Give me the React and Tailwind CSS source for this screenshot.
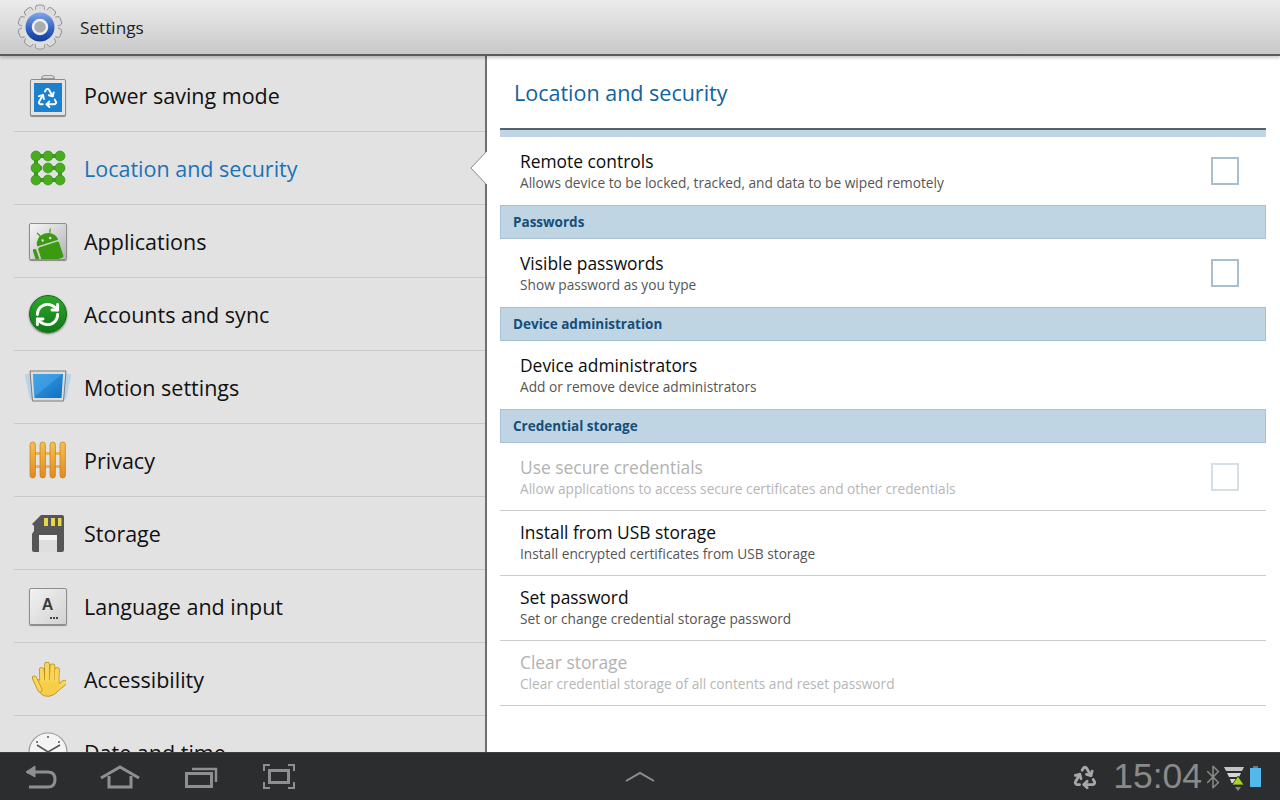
import React from 'react';
import { Recycle, RefreshCw, Bluetooth } from 'lucide-react';

const FONT = { fontFamily: '"Open Sans", "Noto Sans", sans-serif' };

function GearIcon() {
  const teeth = [0, 36, 72, 108, 144, 180, 216, 252, 288, 324];
  return (
    <svg width="46" height="46" viewBox="0 0 46 46">
      <defs>
        <linearGradient id="gearBlue" x1="0" y1="0" x2="0" y2="1">
          <stop offset="0" stopColor="#7fa6ea" />
          <stop offset="0.55" stopColor="#3464c4" />
          <stop offset="1" stopColor="#123c98" />
        </linearGradient>
      </defs>
      {teeth.map(a => (
        <rect key={a} x="18.5" y="1" width="9" height="9" rx="2.5" fill="#dcdcdc" stroke="#8e8e8e" strokeWidth="0.9" transform={`rotate(${a} 23 23)`} />
      ))}
      <circle cx="23" cy="23" r="18" fill="#dedede" />
      <circle cx="23" cy="23" r="14.5" fill="url(#gearBlue)" />
      <circle cx="23" cy="23" r="7" fill="#a9adb2" stroke="#efefef" strokeWidth="2.5" />
    </svg>
  );
}

function BatteryIcon() {
  return (
    <div className="relative w-[38px] h-[41px] flex flex-col items-center">
      <div className="w-[14px] h-[4px] bg-[#dcdcdc] border border-[#9a9a9a] rounded-t-sm" />
      <div className="w-[36px] h-[37px] bg-[#e4e4e4] border border-[#8c8c8c] rounded-[2px] p-[3px] shadow-[0_1px_1px_rgba(0,0,0,0.4)]">
        <div className="w-full h-full bg-[#1d80cc] flex items-center justify-center">
          <Recycle size={23} color="#ffffff" strokeWidth={2} />
        </div>
      </div>
    </div>
  );
}

function GridIcon() {
  const dots = [[6, 6], [18, 6], [30, 6], [6, 18], [18, 18], [30, 18], [6, 30], [18, 30], [30, 30]];
  return (
    <svg width="36" height="36" viewBox="0 0 36 36">
      <path d="M6 6H30M6 6V30H30V18H18" fill="none" stroke="#3f9e1e" strokeWidth="4" />
      <path d="M6 18H12" fill="none" stroke="#3f9e1e" strokeWidth="4" />
      {dots.map(([x, y]) => (
        <circle key={`${x}-${y}`} cx={x} cy={y} r="5" fill="#47ac1e" stroke="#2f8a15" strokeWidth="0.6" />
      ))}
    </svg>
  );
}

function AndroidIcon() {
  return (
    <div className="w-[38px] h-[37px] border border-[#8e8e8e] rounded-[2px] bg-gradient-to-br from-[#f6f6f6] to-[#b4b4b4] shadow-[0_1px_1px_rgba(0,0,0,0.4)] overflow-hidden">
      <svg width="36" height="35" viewBox="0 0 36 35">
        <g transform="rotate(-18 18 20)" fill="#3c9a12">
          <path d="M7 19a11 10 0 0 1 22 0z" />
          <rect x="7" y="20.5" width="22" height="17" rx="2" />
          <rect x="1.5" y="20.5" width="3.6" height="12" rx="1.8" />
          <path d="M13 10L11 6M23 10L25 6" stroke="#3c9a12" strokeWidth="1.2" />
          <circle cx="14" cy="15" r="1.2" fill="#e8e8e8" />
          <circle cx="22" cy="15" r="1.2" fill="#e8e8e8" />
        </g>
      </svg>
    </div>
  );
}

function SyncIcon() {
  return (
    <div className="w-[38px] h-[38px] rounded-full bg-gradient-to-b from-[#2fa62f] to-[#0d7a14] border border-[#0c6a12] flex items-center justify-center shadow-[0_1px_2px_rgba(0,0,0,0.5)]">
      <RefreshCw size={27} color="#ffffff" strokeWidth={2.6} />
    </div>
  );
}

function MotionIcon() {
  return (
    <svg width="48" height="34" viewBox="0 0 48 34">
      <defs>
        <linearGradient id="motionBlue" x1="0" y1="0" x2="1" y2="1">
          <stop offset="0" stopColor="#3aa0e6" />
          <stop offset="1" stopColor="#0f6fc0" />
        </linearGradient>
      </defs>
      <path d="M1 5L9 3V29H6z" fill="#b5d3ea" stroke="#c5d5e0" strokeWidth="0.6" />
      <path d="M47 5L39 3V29H42z" fill="#b5d3ea" stroke="#c5d5e0" strokeWidth="0.6" />
      <path d="M6 1H42L39.5 31H8.5z" fill="#dcdcdc" stroke="#7c7c7c" strokeWidth="1" />
      <path d="M9 4H39L37.5 28H10.5z" fill="url(#motionBlue)" />
      <path d="M10 27L37 5L38 4H9z" fill="#4aa8ea" opacity="0.55" />
    </svg>
  );
}

function FenceIcon() {
  const pales = [1, 11, 21, 31];
  return (
    <svg width="38" height="38" viewBox="0 0 38 38">
      <defs>
        <linearGradient id="paleOrange" x1="0" y1="0" x2="0" y2="1">
          <stop offset="0" stopColor="#f4c24e" />
          <stop offset="1" stopColor="#e08a22" />
        </linearGradient>
      </defs>
      <rect x="3" y="11" width="32" height="3" fill="#e2b65a" />
      <rect x="3" y="24" width="32" height="3" fill="#e2b65a" />
      {pales.map(x => (
        <rect key={x} x={x} y="1" width="5.4" height="36" rx="2.7" fill="url(#paleOrange)" stroke="#c57c14" strokeWidth="0.7" />
      ))}
    </svg>
  );
}

function SdIcon() {
  return (
    <svg width="34" height="39" viewBox="0 0 34 39">
      <path d="M10 1H31Q33 1 33 3V36Q33 38 31 38H3Q1 38 1 36V20L3 17V12L1 10z" fill="#565656" />
      <rect x="13" y="4" width="4" height="8" fill="#e8d44a" />
      <rect x="20" y="4" width="4" height="8" fill="#e8d44a" />
      <rect x="27" y="4" width="3.5" height="8" fill="#e8d44a" />
      <rect x="8" y="21" width="18" height="17" fill="#dedede" />
      <rect x="8" y="21" width="18" height="5" fill="#f4f4f4" />
    </svg>
  );
}

function KeyIcon() {
  return (
    <div className="relative w-[38px] h-[37px] border border-[#8e8e8e] rounded-[2px] bg-gradient-to-br from-[#f2f2f2] to-[#d2d2d2] shadow-[0_1px_1px_rgba(0,0,0,0.4)] flex items-center justify-center">
      <span className="text-[16px] font-bold text-[#3c3c3c] leading-none -mt-[2px]" style={{ fontFamily: '"Liberation Sans", sans-serif' }}>A</span>
      <span className="absolute right-[8px] bottom-[5px] w-[8px] h-[2px] border-b-2 border-dotted border-[#444]" />
    </div>
  );
}

function HandIcon() {
  const shape = (
    <>
      <path d="M14 30L13 11M19 28L19 5M24 28L25 7M29 30L30 11" strokeLinecap="round" />
      <path d="M31 31L38 25" strokeLinecap="round" />
    </>
  );
  return (
    <svg width="36" height="38" viewBox="0 0 40 42">
      <g fill="none" stroke="#c08c14" strokeWidth="6.2">{shape}</g>
      <path d="M6 22L11 36Q15 41 22 40Q30 38 33 31L32 22H12z" fill="#f6cf4a" stroke="#c08c14" strokeWidth="1" />
      <g fill="none" stroke="#f8d658" strokeWidth="4.6">{shape}</g>
      <path d="M11 24L13 33Q17 38 22 38Q29 37 32 31V24z" fill="#f6cf4a" />
      <path d="M5 20L11 33" fill="none" stroke="#c08c14" strokeWidth="5.6" strokeLinecap="round" />
      <path d="M5 20L11 33" fill="none" stroke="#f8d658" strokeWidth="4" strokeLinecap="round" />
    </svg>
  );
}

function ClockIcon() {
  return (
    <svg width="40" height="40" viewBox="0 0 40 40">
      <circle cx="20" cy="20" r="19" fill="#f4f4f4" stroke="#9a9a9a" strokeWidth="1.2" />
      <circle cx="20" cy="5" r="1" fill="#555" />
      <circle cx="9" cy="10" r="1" fill="#555" />
      <circle cx="31" cy="10" r="1" fill="#555" />
      <path d="M9 13L20 20L32 13" fill="none" stroke="#555" strokeWidth="1.6" />
    </svg>
  );
}

const menuItems = [
  { label: 'Power saving mode', icon: <BatteryIcon /> },
  { label: 'Location and security', icon: <GridIcon />, active: true },
  { label: 'Applications', icon: <AndroidIcon /> },
  { label: 'Accounts and sync', icon: <SyncIcon /> },
  { label: 'Motion settings', icon: <MotionIcon /> },
  { label: 'Privacy', icon: <FenceIcon /> },
  { label: 'Storage', icon: <SdIcon /> },
  { label: 'Language and input', icon: <KeyIcon /> },
  { label: 'Accessibility', icon: <HandIcon /> },
  { label: 'Date and time', icon: <ClockIcon /> },
];

function MenuRow({ item }) {
  return (
    <div className="ml-[14px] h-[73px] shrink-0 flex items-center border-b border-[#c8c8c8]">
      <div className="w-[67px] flex items-center justify-center">{item.icon}</div>
      <span className={`ml-[3px] pt-[2px] text-[21.5px] ${item.active ? 'text-[#1a72b8]' : 'text-[#111111]'}`}>
        {item.label}
      </span>
    </div>
  );
}

function SectionBar({ children }) {
  return (
    <div className="h-[34px] flex items-center px-[12px] bg-[#bfd5e4] border border-[#a6c2d4] text-[13.5px] font-bold text-[#164e78]">
      {children}
    </div>
  );
}

function Checkbox({ disabled, nudge }) {
  return <div className={`w-[28px] h-[28px] border-2 ${nudge ? 'mt-[2px]' : ''} ${disabled ? 'border-[#d5dfe5]' : 'border-[#a9bfcd]'}`} />;
}

function SettingRow({ title, sub, check, disabled, height = 'h-[68px] pb-[2px]', line }) {
  return (
    <div className={`${height} flex items-center justify-between pl-[20px] pr-[27px] ${line ? 'border-b border-[#cccccc]' : ''}`}>
      <div className="flex flex-col">
        <span className={`text-[17.4px] leading-[24px] ${disabled ? 'text-[#b2b2b2]' : 'text-[#0c0c0c]'}`}>{title}</span>
        <span className={`text-[13.7px] leading-[19px] ${disabled ? 'text-[#b6b6b6]' : 'text-[#555555]'}`}>{sub}</span>
      </div>
      {check && <Checkbox disabled={disabled} nudge={!disabled} />}
    </div>
  );
}

export default function App() {
  return (
    <div className="relative w-[1280px] h-[800px] flex flex-col overflow-hidden bg-white" style={FONT}>
      {/* top bar */}
      <div className="h-[56px] shrink-0 flex items-center bg-gradient-to-b from-[#ececec] to-[#c9c9c9] border-b-2 border-[#5c5c5c] pl-[17px] relative z-10 shadow-[0_2px_3px_rgba(0,0,0,0.2)]">
        <GearIcon />
        <span className="ml-[17px] pt-[2px] text-[17.2px] text-[#222222]">Settings</span>
      </div>

      <div className="flex-1 flex min-h-0">
        {/* left menu */}
        <div className="w-[485px] shrink-0 bg-[#e2e2e2] pt-[3px] overflow-hidden flex flex-col">
          {menuItems.map(item => (
            <MenuRow key={item.label} item={item} />
          ))}
        </div>

        {/* right panel */}
        <div className="relative flex-1 border-l-2 border-[#707070] pl-[13px] pr-[14px]">
          <svg className="absolute left-[-17px] top-[96px]" width="18" height="32" viewBox="0 0 18 32">
            <path d="M16 0L1 16L16 32H18V0z" fill="#ffffff" />
            <path d="M16 0L1 16L16 32" fill="none" stroke="#8a8a8a" strokeWidth="1" />
          </svg>

          <div className="h-[72px] flex items-center pl-[14px] pt-[2px] text-[21.5px] text-[#0f639e]">
            Location and security
          </div>
          <div className="h-[9px] bg-[#bfd5e4] border-t-2 border-[#56626c]" />
          <SettingRow title="Remote controls" sub="Allows device to be locked, tracked, and data to be wiped remotely" check />
          <SectionBar>Passwords</SectionBar>
          <SettingRow title="Visible passwords" sub="Show password as you type" check />
          <SectionBar>Device administration</SectionBar>
          <SettingRow title="Device administrators" sub="Add or remove device administrators" />
          <SectionBar>Credential storage</SectionBar>
          <SettingRow title="Use secure credentials" sub="Allow applications to access secure certificates and other credentials" check disabled height="h-[68px]" line />
          <SettingRow title="Install from USB storage" sub="Install encrypted certificates from USB storage" height="h-[65px] pb-[4px]" line />
          <SettingRow title="Set password" sub="Set or change credential storage password" height="h-[65px] pb-[4px]" line />
          <SettingRow title="Clear storage" sub="Clear credential storage of all contents and reset password" disabled height="h-[65px] pb-[4px]" line />
        </div>
      </div>

      {/* bottom system bar */}
      <div className="h-[48px] shrink-0 grid grid-cols-3 items-center bg-[#2b2d2e] border-t border-[#3c3e3f] relative z-10">
        <div className="flex items-center pl-[24px]">
          <svg width="33" height="24" viewBox="0 0 33 24" fill="none" stroke="#8f8f8f" strokeWidth="3">
            <path d="M3 7H24Q31 7 31 14.5Q31 22 24 22H5" />
            <path d="M11 1L2 7L11 12V1z" fill="#8f8f8f" strokeWidth="1" />
          </svg>
          <svg className="ml-[43px]" width="40" height="24" viewBox="0 0 40 24" fill="none" stroke="#8f8f8f" strokeWidth="3">
            <path d="M1 13L20 2L39 13" />
            <path d="M9 11V22H31V11" />
          </svg>
          <svg className="ml-[45px]" width="33" height="22" viewBox="0 0 33 22" fill="none" stroke="#8f8f8f" strokeWidth="3">
            <rect x="1.5" y="7.5" width="25" height="13" />
            <path d="M7 3H31V16" strokeWidth="2.5" />
          </svg>
          <svg className="ml-[45px]" width="32" height="25" viewBox="0 0 32 25" fill="none" stroke="#8f8f8f" strokeWidth="2">
            <path d="M1 7V1H7M25 1H31V7M31 18V24H25M7 24H1V18" />
            <rect x="6.5" y="6.5" width="19" height="12" strokeWidth="3" />
          </svg>
        </div>
        <div className="flex justify-center">
          <svg width="30" height="11" viewBox="0 0 30 11" fill="none" stroke="#8f8f8f" strokeWidth="2">
            <path d="M1 10L15 2L29 10" />
          </svg>
        </div>
        <div className="flex items-center justify-end pr-[19px]">
          <Recycle size={26} color="#a8a8a8" strokeWidth={2.6} />
          <span className="ml-[15px] text-[35.5px] leading-none text-[#8a8a8a]" style={{ fontFamily: '"Liberation Sans", sans-serif' }}>15:04</span>
          <Bluetooth className="-ml-[2px] -mr-[3px]" size={26} color="#8a8a8a" strokeWidth={1.4} />
          <svg className="ml-[1px]" width="20" height="28" viewBox="0 0 20 28">
            <path d="M0 4H20L18 8H2z" fill="#c4c4c4" />
            <path d="M3 10H17L15 14H5z" fill="#d6d6d6" />
            <path d="M6 16H14L12.5 20H7.5z" fill="#d6d6d6" />
            <path d="M14 13L20 22H8z" fill="#a6d622" stroke="#26282a" strokeWidth="0.8" />
            <path d="M11 24H17L14 28z" fill="#8a8a8a" />
          </svg>
          <div className="ml-[6px] flex flex-col items-center">
            <div className="w-[5px] h-[2px] bg-[#777]" />
            <div className="w-[11px] h-[19px] bg-[#55b8ea]" />
          </div>
        </div>
      </div>
    </div>
  );
}
